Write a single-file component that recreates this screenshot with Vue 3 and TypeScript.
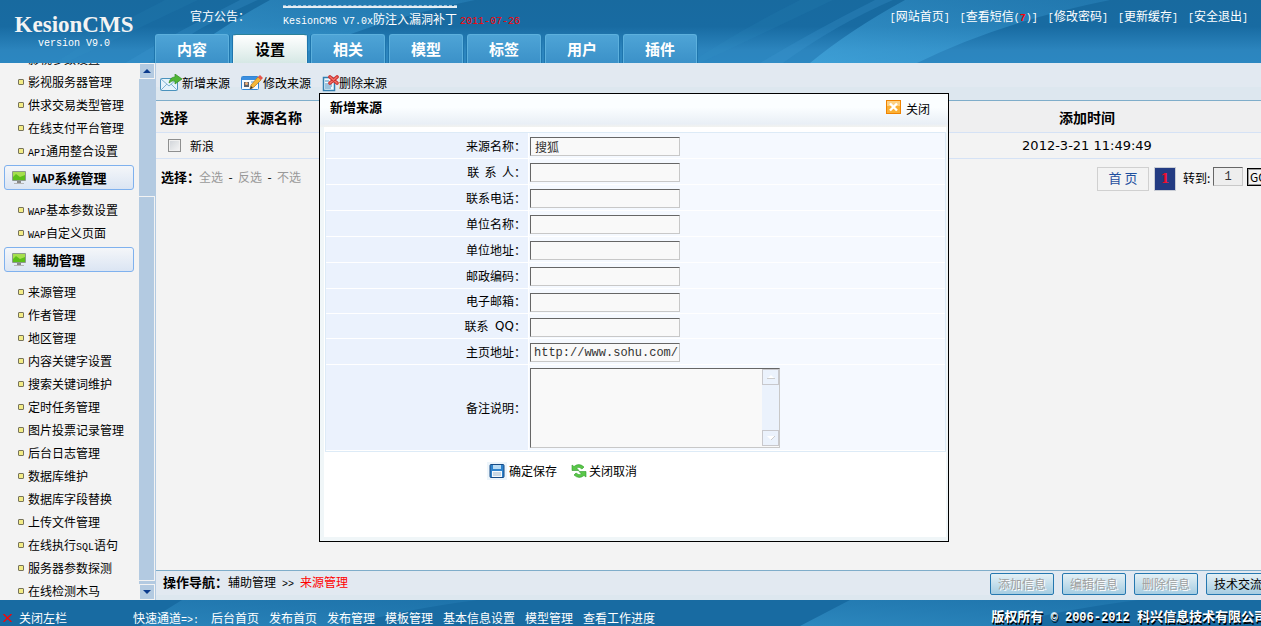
<script setup lang="ts">
import { ref } from 'vue'

interface MenuGroup { title: string; latin: string; items: { latin?: string; lead?: string; text: string }[] }
interface Field { id: string; label: string; latin?: string; value: string; short?: boolean; mono?: boolean }

const tabs = ['内容', '设置', '相关', '模型', '标签', '用户', '插件']
const activeTab = ref('设置')

const groups: MenuGroup[] = [
  { title: '', latin: '', items: [{ text: '影视参数设置' }, { text: '影视服务器管理' }, { text: '供求交易类型管理' }, { text: '在线支付平台管理' }, { latin: 'API', text: '通用整合设置' }] },
  { title: '系统管理', latin: 'WAP', items: [{ latin: 'WAP', text: '基本参数设置' }, { latin: 'WAP', text: '自定义页面' }] },
  {
    title: '辅助管理', latin: '', items: [
      { text: '来源管理' }, { text: '作者管理' }, { text: '地区管理' }, { text: '内容关键字设置' }, { text: '搜索关键词维护' },
      { text: '定时任务管理' }, { text: '图片投票记录管理' }, { text: '后台日志管理' }, { text: '数据库维护' }, { text: '数据库字段替换' },
      { text: '上传文件管理' }, { lead: '在线执行', latin: 'SQL', text: '语句' }, { text: '服务器参数探测' }, { text: '在线检测木马' },
    ],
  },
]

const topLinks = [
  { text: '网站首页' }, { text: '查看短信', count: 7 }, { text: '修改密码' }, { text: '更新缓存' }, { text: '安全退出' },
]

const fields = ref<Field[]>([
  { id: 'name', label: '来源名称', value: '搜狐' },
  { id: 'contact', label: '联  系  人', value: '' },
  { id: 'phone', label: '联系电话', value: '' },
  { id: 'company', label: '单位名称', value: '' },
  { id: 'address', label: '单位地址', value: '' },
  { id: 'zip', label: '邮政编码', value: '' },
  { id: 'email', label: '电子邮箱', value: '', short: true },
  { id: 'qq', label: '联系 ', latin: ' QQ', value: '', short: true },
  { id: 'home', label: '主页地址', value: 'http://www.sohu.com/', mono: true },
])
const remark = ref('')
const picked = ref(false)
const pageNo = ref('1')
const quick = ['后台首页', '发布首页', '发布管理', '模板管理', '基本信息设置', '模型管理', '查看工作进度']
const actions = ['添加信息', '编辑信息', '删除信息']
</script>

<template>
  <div class="page">
    <header class="top">
      <svg class="sky" viewBox="0 0 1261 63" preserveAspectRatio="none" aria-hidden="true">
        <defs>
          <linearGradient id="skyBase" x1="0" y1="0" x2="0" y2="1">
            <stop offset="0" stop-color="#186a9f" /><stop offset=".42" stop-color="#186ba2" />
            <stop offset=".8" stop-color="#2c85be" /><stop offset="1" stop-color="#2c87c1" />
          </linearGradient>
          <linearGradient id="beam" x1="0" y1="1" x2="1" y2="0">
            <stop offset="0" stop-color="#46abe0" stop-opacity=".65" /><stop offset="1" stop-color="#2f8bc4" stop-opacity=".4" />
          </linearGradient>
        </defs>
        <rect width="1261" height="63" fill="url(#skyBase)" />
        <g v-for="dx in [-635, 0]" :key="dx" :transform="`translate(${dx} 0)`">
          <path d="M810 63Q850 30 905 0H1110Q1000 22 917 63Z" fill="url(#beam)" />
          <path d="M783 63Q835 25 893 0H875Q815 30 760 63Z" fill="#3f9cd2" opacity=".25" />
          <path d="M700 63Q770 30 833 0H800Q740 30 690 63Z" fill="#3f9cd2" opacity=".1" />
        </g>
      </svg>
      <div class="brand">
        <strong>KesionCMS</strong>
        <span>version V9.0</span>
      </div>
      <div class="head">
        <div class="head-row">
          <span class="notice-label">官方公告：</span>
          <div class="notice">
            <i class="rule"></i>
            <a href="#"><span class="lat">KesionCMS V7.0x</span>防注入漏洞补丁</a>
            <span class="date">2011-07-26</span>
          </div>
          <nav class="links">
            <a v-for="l in topLinks" :key="l.text" href="#"><span class="lat">[</span>{{ l.text }}<span v-if="l.count" class="lat">(<b>{{ l.count }}</b>)</span><span class="lat">]</span></a>
          </nav>
        </div>
        <nav class="tabs">
          <button v-for="t in tabs" :key="t" type="button" :class="{ on: t === activeTab }" @click="activeTab = t">{{ t }}</button>
        </nav>
      </div>
    </header>

    <div class="body">
      <aside class="side">
        <div class="menu">
          <section v-for="(g, gi) in groups" :key="gi">
            <h2 v-if="g.title">
              <svg width="16" height="14" viewBox="0 0 16 14" aria-hidden="true">
                <rect x="1" y="0" width="14" height="10" rx="1" fill="#8c9a8c" />
                <rect x="2" y="1" width="12" height="8" fill="#5cc01a" />
                <path d="M2 1h12v3L9 6 5 3 2 6z" fill="#a5df4e" />
                <path d="M6 10h4v2H6z" fill="#888" /><path d="M3 12h10v1H3z" fill="#b5b5b5" />
              </svg>
              <span><span v-if="g.latin" class="lat">{{ g.latin }}</span>{{ g.title }}</span>
            </h2>
            <ul :class="{ first: !g.title }">
              <li v-for="it in g.items" :key="it.text"><a href="#">{{ it.lead }}<span v-if="it.latin" class="lat">{{ it.latin }}</span>{{ it.text }}</a></li>
            </ul>
          </section>
        </div>
        <div class="bar" aria-hidden="true">
          <span class="arrow"><svg width="8" height="4" viewBox="0 0 8 4"><path d="M0 4L4 0L8 4Z" fill="#0b3a8c" /></svg></span>
          <span class="track"></span>
          <span class="thumb"></span>
          <span class="arrow low"><svg width="8" height="4" viewBox="0 0 8 4"><path d="M0 0H8L4 4Z" fill="#0b3a8c" /></svg></span>
        </div>
      </aside>

      <main class="main">
        <div class="tools">
          <a href="#">
            <svg width="22" height="18" viewBox="0 0 22 18" aria-hidden="true">
              <rect x=".5" y="4.5" width="17" height="12" rx="1" fill="#e4f3fb" stroke="#4a93bd" />
              <path d="M1 5l8 7 8-7M1 16l6-6M17 16l-6-6" fill="none" stroke="#7cb2d2" />
              <path d="M9 9Q10 3 15 3V0l7 5-7 5V7Q12 6 9 9Z" fill="#4fb535" stroke="#2f8c22" stroke-width=".7" />
            </svg>新增来源</a>
          <a href="#">
            <svg width="22" height="18" viewBox="0 0 22 18" aria-hidden="true">
              <rect x=".5" y="2.5" width="17" height="13" rx="1" fill="#f5fbff" stroke="#3286d4" />
              <path d="M1 3h16v3H1z" fill="#3b8fe0" /><rect x="3" y="8" width="5" height="5" fill="#58606c" /><circle cx="5.5" cy="9.5" r="1.5" fill="#f0b27a" />
              <path d="M10 8h5M10 11h3" stroke="#5a9bd4" />
              <path d="M9 15l1-4 7-8 3 3-7 7z" fill="#f6b738" stroke="#b87418" stroke-width=".7" /><path d="M17 3l2-2 3 3-2 2z" fill="#e7554c" /><path d="M9 15l1-3 2 2z" fill="#333" />
            </svg>修改来源</a>
          <a href="#">
            <svg width="17" height="18" viewBox="0 0 17 18" aria-hidden="true">
              <path d="M1.500 3.500h9l2 2v11h-11z" fill="#eef8fe" stroke="#337fb1" stroke-width="1.500" />
              <path d="M3 7h4M3 10h7M3 12h7M3 14h6" stroke="#4b8dbc" />
              <path d="M8 3l7 6M15 3L8 9" fill="none" stroke="#cf302d" stroke-width="3.600" stroke-linecap="round" />
              <path d="M8 3l7 6M15 3L8 9" stroke="#f0736a" stroke-width="1.400" stroke-linecap="round" />
            </svg>删除来源</a>
        </div>

        <div class="content">
          <table class="list">
            <colgroup><col class="c1"><col class="c2"><col><col class="c4"></colgroup>
            <thead><tr><th class="pick">选择</th><th>来源名称</th><th></th><th>添加时间</th></tr></thead>
            <tbody>
              <tr>
                <td class="box"><input v-model="picked" type="checkbox" aria-label="新浪"></td>
                <td>新浪</td><td></td><td class="time">2012-3-21 11:49:49</td>
              </tr>
            </tbody>
          </table>
          <div class="under">
            <div class="sel"><b>选择：</b><a href="#">全选</a><i>-</i><a href="#">反选</a><i>-</i><a href="#">不选</a></div>
            <div class="pager">
              <a class="home" href="#">首 页</a><b class="cur">1</b>
              <label for="goto">转到:</label><input id="goto" v-model="pageNo" type="text"><button type="button">GO</button>
            </div>
          </div>
        </div>

        <div class="status">
          <p><b>操作导航：</b>辅助管理<span class="gt">{{ ' >> ' }}</span><em>来源管理</em></p>
          <div class="acts">
            <button v-for="a in actions" :key="a" type="button" disabled>{{ a }}</button>
            <button type="button">技术交流</button>
          </div>
        </div>
      </main>
    </div>

    <footer class="foot">
      <svg class="sky" viewBox="0 0 1261 26" preserveAspectRatio="none" aria-hidden="true">
        <rect width="1261" height="26" fill="#186ba2" />
        <path d="M140 26L182 0H477Q400 10 345 26Z" fill="url(#beam)" opacity=".6" />
        <path d="M800 26L850 0H1138Q1060 10 1000 26Z" fill="url(#beam)" opacity=".7" />
      </svg>
      <button type="button" class="fold">
        <svg width="9" height="8" viewBox="0 0 9 8" aria-hidden="true"><path d="M.5 0l8 8M8.500 0l-8 8" stroke="#f00" stroke-width="1.300" /></svg>关闭左栏
      </button>
      <nav class="quick"><span class="ql">快速通道<span class="lat">=&gt;:</span></span><a v-for="q in quick" :key="q" href="#">{{ q }}</a></nav>
      <p class="copy">版权所有<span>{{ ' © 2006-2012 ' }}</span>科兴信息技术有限公司</p>
    </footer>

    <section class="dialog" role="dialog" aria-labelledby="dlg-title">
      <div class="dlg-head">
        <h1 id="dlg-title">新增来源</h1>
        <button type="button">
          <svg width="15" height="14" viewBox="0 0 15 14" aria-hidden="true">
            <rect x=".5" y=".5" width="14" height="13" fill="#fbb034" stroke="#f08300" /><path d="M1 1h13v5H1z" fill="#fcd083" />
            <path d="M4 3.500l7 7M11 3.500l-7 7" stroke="#fff" stroke-width="2.400" />
          </svg>关闭
        </button>
      </div>
      <form class="dlg-body" @submit.prevent>
        <div class="grid">
          <div v-for="f in fields" :key="f.id" class="row" :class="{ short: f.short }">
            <label :for="f.id">{{ f.label }}<span v-if="f.latin" class="qq">{{ f.latin }}</span>：</label>
            <div><input :id="f.id" v-model="f.value" type="text" :class="{ url: f.mono }"></div>
          </div>
          <div class="row tall">
            <label for="remark">备注说明：</label>
            <div class="area">
              <textarea id="remark" v-model="remark"></textarea>
              <span class="mini" aria-hidden="true">
                <i><svg width="8" height="4" viewBox="0 0 8 4"><path d="M0 4L4 0L8 4Z" fill="#fff" /><path d="M0 3.500H8" stroke="#ccc" /></svg></i>
                <i><svg width="8" height="4" viewBox="0 0 8 4"><path d="M0 0H8L4 4Z" fill="#fff" /><path d="M8 0L4 4" stroke="#ccc" /></svg></i>
              </span>
            </div>
          </div>
        </div>
        <div class="dlg-acts">
          <button type="submit">
            <span class="glow"><svg width="16" height="14" viewBox="0 0 16 14" aria-hidden="true">
              <rect x="1" y=".5" width="14" height="13" rx="1" fill="#2f83cc" stroke="#174b85" /><rect x="4" y="1" width="8" height="4" fill="#b9dcf5" />
              <rect x="3" y="7" width="10" height="6" fill="#f4f9fd" /><path d="M4 9h8M4 11h8" stroke="#9cb5c9" />
            </svg></span>确定保存
          </button>
          <button type="button">
            <svg width="16" height="14" viewBox="0 0 16 14" aria-hidden="true">
              <path d="M1 1l2 1.500Q8-1.500 13 3l-2 2Q8 2 5.500 4L8 6.500H1z" fill="#59c747" stroke="#2f9a2c" stroke-width=".6" />
              <path d="M15 13l-2-1.500Q8 15.500 3 11l2-2Q8 12 10.500 10L8 7.500h7z" fill="#59c747" stroke="#2f9a2c" stroke-width=".6" />
            </svg>关闭取消
          </button>
        </div>
      </form>
    </section>
  </div>
</template>

<style>
html, body { margin: 0; overflow: hidden; }
</style>

<style scoped>
.page { position: relative; height: 100vh; display: flex; flex-direction: column; overflow: hidden; background: #f3f3f3; color: #000; font: 12px/16px "Noto Sans CJK SC", sans-serif; }
.page * { box-sizing: border-box; }
a { color: inherit; text-decoration: none; }
button, input, textarea { font: inherit; color: inherit; margin: 0; padding: 0; border-radius: 0; outline: none; }
button { background: none; border: 0; white-space: nowrap; }
svg { flex: none; }
p, h1, h2, ul { margin: 0; padding: 0; }
i { font-style: normal; }
.lat { font-family: "Liberation Mono", monospace; font-size: 10px; line-height: 1px; }

.top { position: relative; flex: none; height: 63px; display: flex; color: #fff; }
.sky { position: absolute; inset: 0; width: 100%; height: 100%; }
.brand { position: relative; width: 155px; padding: 14px 7px 0 0; text-align: center; display: flex; flex-direction: column; }
.brand strong { font: bold 23px/22px "Liberation Serif", serif; color: #f3f3f3; }
.brand span { font: 10px/16px "Liberation Mono", monospace; }
.head { position: relative; flex: 1; display: flex; flex-direction: column; justify-content: space-between; }
.head-row { display: flex; padding: 0 13px 0 35px; height: 32px; }
.notice-label { width: 93px; padding-top: 8px; }
.notice { padding-top: 5px; white-space: nowrap; }
.rule { display: block; width: 174px; height: 3px; border-bottom: 2px solid #e6eff5; border-top: 1px dashed #9cc0d8; margin-bottom: 3px; }
.date { color: #f00; font: 10px/1px "Liberation Mono", monospace; margin-left: 3px; }
.links { display: flex; gap: 10px; margin-left: auto; padding-top: 8px; white-space: nowrap; }
.links b { color: #f00; }
.tabs { display: flex; gap: 4px; }
.tabs button { width: 74px; height: 29px; border: 1px solid #5cb0dd; border-bottom: 0; border-radius: 3px 3px 0 0; background: linear-gradient(#4ea4d6, #3b91c8); color: #fff; font-size: 15px; line-height: 28px; font-weight: bold; box-shadow: 1px 0 #1e75ad, -1px 0 #1e75ad; }
.tabs .on { background: linear-gradient(#fff, #d6e8e5); color: #000; border-color: #2b8199 #e6f2f0 #e6f2f0; }

.body { flex: 1; min-height: 0; display: flex; }
.side { width: 156px; flex: none; display: flex; overflow: hidden; border-right: 1px solid #b3cae1; }
.menu { flex: 1; overflow: hidden; }
.menu ul { list-style: none; padding: 8px 0 3px 18px; }
.menu ul.first { padding-top: 0; margin-top: -16px; }
.menu li { height: 23px; display: flex; align-items: center; gap: 4px; white-space: nowrap; }
.menu li::before { content: ""; width: 6px; height: 6px; border: 1px solid #77735a; background: #f3ec86; border-radius: 1px; box-sizing: border-box; }
h2 { display: flex; align-items: center; gap: 6px; height: 25px; margin: 0 5px 0 4px; padding-left: 6px; border: 1px solid #7fb1ee; border-radius: 3px; background: linear-gradient(#f4f6f9, #dbe5f3); font-size: 13px; line-height: 20px; }
h2 .lat { font-size: 12px; }
.bar { width: 16px; display: flex; flex-direction: column; background: #b3cae1; }
.arrow { height: 16px; border: 1px solid #f3f3f3; display: flex; align-items: center; justify-content: center; }
.track { height: 117px; }
.thumb { flex: 1; border: 1px solid #f3f3f3; border-left: 0; margin-bottom: 3px; }

.main { flex: 1; min-width: 0; display: flex; flex-direction: column; }
.tools { height: 38px; flex: none; display: flex; gap: 11px; padding: 2px 4px 0; background: linear-gradient(#e2e9f1 24px, #dde7ef 24px); border-bottom: 1px solid #7fadca; }
.tools a { display: flex; align-items: center; }
.content { flex: 1; min-height: 0; }
.list { width: 100%; border-collapse: separate; border-spacing: 0; table-layout: fixed; }
.c1 { width: 34px; } .c2 { width: 168px; } .c4 { width: 348px; }
.list th, .list td { padding: 0; border-bottom: 1px solid #d5e2f5; white-space: nowrap; }
.list th { height: 32px; background: #efeff0; font-size: 14px; }
.list .pick { text-align: left; padding-left: 4px; overflow: visible; }
.list td { height: 26px; text-align: left; }
.list .box { padding-left: 12px; }
.list input { appearance: none; display: block; width: 13px; height: 13px; border: 1px solid #8e8f8f; background: linear-gradient(135deg, #cfd3d8, #f6f6f6); box-shadow: inset 0 0 0 1px #f0f0f0; }
.list .time { text-align: center; font: 13px/20px "DejaVu Sans", sans-serif; }
.under { display: flex; justify-content: space-between; padding: 8px 0 0 5px; }
.sel { display: flex; padding-top: 2px; color: #999; }
.sel b { color: #000; font-size: 13px; width: 38px; white-space: nowrap; }
.sel i { color: #000; width: 15px; text-align: center; }
.pager { display: flex; align-items: flex-start; margin-right: -9px; }
.home { width: 52px; height: 24px; border: 1px solid #d0d0d0; color: #1f4f9e; font-size: 13px; line-height: 20px; text-align: center; }
.cur { width: 22px; height: 24px; margin: 0 7px 0 5px; border: 1px solid #c8ccd4; background: #233b82; color: #f01030; text-align: center; font: bold 13px/22px "DejaVu Serif", serif; }
.pager label { width: 30px; line-height: 22px; white-space: nowrap; }
.pager input { width: 30px; height: 19px; border: 1px solid #666; border-right-color: #c8c8c8; border-bottom-color: #c8c8c8; background: #eee; text-align: center; color: #333; font: 12px/16px "Liberation Mono", monospace; }
.pager button { width: 23px; height: 18px; margin: 1px 0 0 4px; border: 1px solid #000; box-shadow: inset 0 0 0 1px #999; background: #f3f3f3; line-height: 14px; text-align: left; padding-left: 2px; }

.status { flex: none; height: 30px; display: flex; justify-content: space-between; border-top: 1px solid #7fadca; background: linear-gradient(#e2e9f1 24px, #dde7ef 24px); padding-left: 7px; }
.status p { padding-top: 3px; white-space: nowrap; }
.status b { font-size: 13px; }
.gt { font: 10px/1px "Liberation Mono", monospace; white-space: pre; }
.status em { font-style: normal; color: #f00; }
.acts { display: flex; gap: 8px; padding-top: 2px; margin-right: -9px; }
.acts button { width: 64px; height: 22px; border: 1px solid #2578b0; border-radius: 2px; background: linear-gradient(#e4f0f5, #a5cde2); color: #000; line-height: 18px; }
.acts button:disabled { color: #a0a0a0; text-shadow: 1px 1px #fff; }

.foot { position: relative; flex: none; height: 26px; display: flex; color: #fff; white-space: nowrap; padding-left: 3px; }
.fold, .quick, .copy { position: relative; padding-top: 10px; line-height: 16px; }
.fold { width: 130px; display: flex; align-items: center; gap: 7px; }
.quick { display: flex; gap: 10px; }
.ql { width: 68px; }
.copy { margin: 0 -6px 0 auto; padding-top: 8px; font-weight: bold; font-size: 13px; text-shadow: 1px 2px #000; }
.copy span { font: bold 12px/1px "Liberation Mono", monospace; white-space: pre; }

.dialog { position: absolute; left: 319px; top: 93px; width: 630px; height: 449px; border: 1px solid #000; background: #f0f6f8; display: flex; flex-direction: column; }
.dlg-head { height: 33px; flex: none; display: flex; justify-content: space-between; padding: 0 18px 0 10px; background: linear-gradient(#fbfeff 40%, #e9eff6 90%, #f2f2ef); }
.dlg-head h1 { font-size: 13px; line-height: 26px; }
.dlg-head button { display: flex; gap: 5px; padding-top: 6px; height: 28px; line-height: 18px; }
.dlg-body { flex: 1; margin: 0 2px 4px 4px; background: #fff; }
.grid { margin: 5px 0 0 1px; border: 1px solid #ddebf7; }
.row { display: grid; grid-template-columns: 202px 1fr; column-gap: 1px; height: 26px; }
.row.short { height: 25px; }
.row > * { border-bottom: 1px solid #fff; display: flex; align-items: center; }
.row label { background: #ebf2fd; justify-content: flex-end; padding-right: 2px; white-space: pre; }
.row > div { background: #f5f9ff; padding: 2px 0 0 1px; }
.row input, textarea { width: 150px; height: 19px; border: 1px solid #666; border-right-color: #c8c8c8; border-bottom-color: #c8c8c8; background: #f9f9f9; color: #333; padding-left: 4px; }
.row .url { font: 12px/16px "Liberation Mono", monospace; padding-left: 3px; }
.qq { font: 12px/16px "DejaVu Sans", sans-serif; white-space: pre; }
.row.tall { height: 86px; }
.row .area { position: relative; padding-top: 0; }
.area textarea { width: 250px; height: 80px; resize: none; }
.mini { position: absolute; left: 233px; top: 4px; width: 17px; height: 77px; background: #ebf2fc; display: flex; flex-direction: column; justify-content: space-between; }
.mini i { height: 16px; border: 1px solid #c8c8cc; display: flex; align-items: center; justify-content: center; }
.dlg-acts { display: flex; gap: 14px; padding: 10px 0 0 163px; }
.dlg-acts button { display: flex; align-items: center; gap: 2px; height: 18px; }
.glow { display: flex; padding: 2px; background: #edf5fb; }
</style>
